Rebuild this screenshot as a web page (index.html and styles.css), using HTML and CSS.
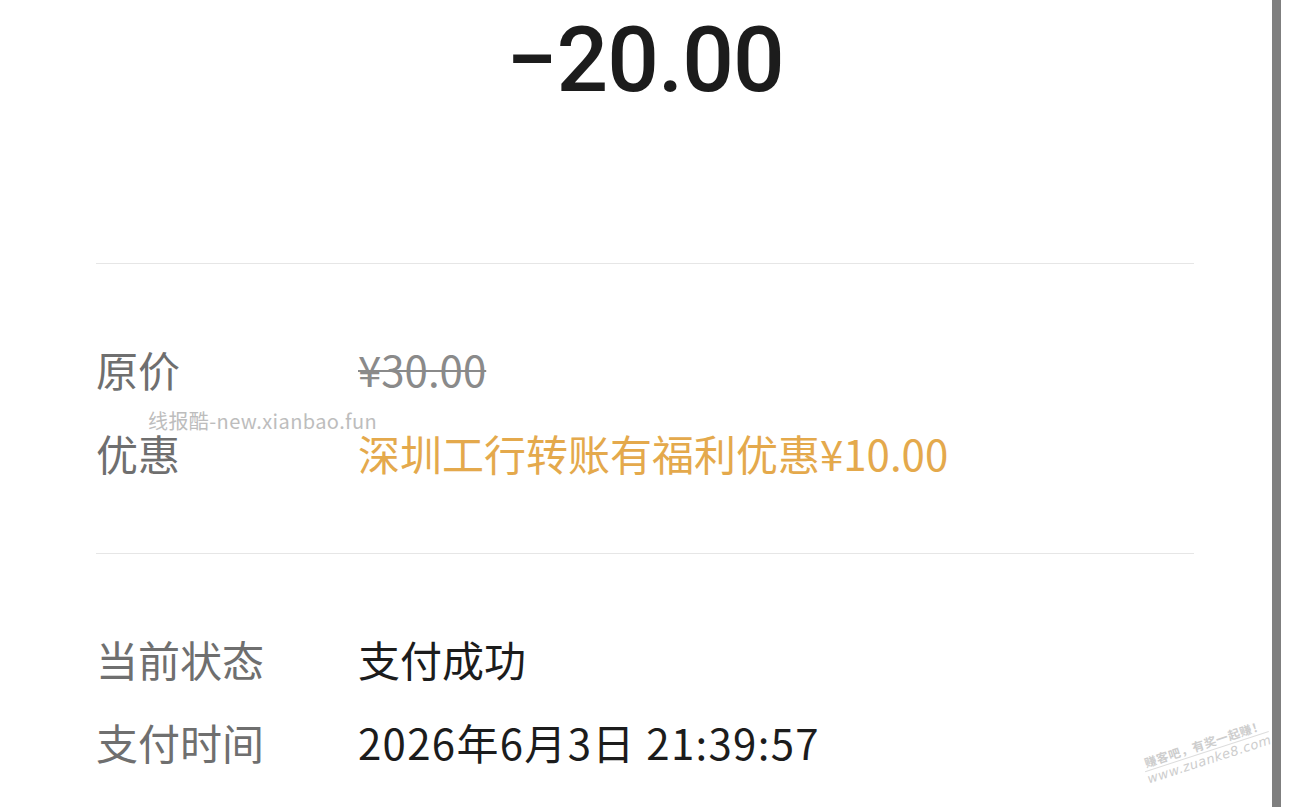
FILE: index.html
```html
<!DOCTYPE html>
<html lang="zh-CN">
<head>
<meta charset="utf-8">
<title>账单详情</title>
<link rel="stylesheet" href="styles.css">
</head>
<body>
<div class="screen">
  <main class="content">
    <div class="amount">−20.00</div>
    <section class="group group-first">
      <div class="row">
        <span class="label">原价</span>
        <span class="value value-struck">¥30.00</span>
      </div>
      <div class="row">
        <span class="label">优惠</span>
        <span class="value value-discount">深圳工行转账有福利优惠¥10.00</span>
      </div>
      <span class="mark">线报酷-new.xianbao.fun</span>
    </section>
    <section class="group group-second">
      <div class="row">
        <span class="label">当前状态</span>
        <span class="value">支付成功</span>
      </div>
      <div class="row">
        <span class="label">支付时间</span>
        <span class="value value-time">2026年6月3日 21:39:57</span>
      </div>
    </section>
    <div class="stamp">
      <div class="stamp-top">赚客吧，有奖一起赚！</div>
      <div class="stamp-bottom">www.zuanke8.com</div>
    </div>
  </main>
  <div class="scrollbar"></div>
  <div class="edge"></div>
</div>
</body>
</html>
```

FILE: styles.css
```css
* { box-sizing: border-box; }

html, body {
  margin: 0;
  padding: 0;
  background: #ffffff;
}

body {
  width: 1290px;
  height: 807px;
  overflow: hidden;
  font-family: "Noto Sans CJK SC", "Noto Sans", sans-serif;
}

.screen {
  display: flex;
  width: 1290px;
  height: 807px;
}

.content {
  position: relative;
  flex: 1;
  padding: 0 78px 0 96px;
}

.amount {
  padding-top: 15px;
  text-align: center;
  font-family: Roboto, "Liberation Sans", sans-serif;
  font-weight: 500;
  font-size: 91px;
  line-height: 91px;
  color: #1c1c1c;
  letter-spacing: -1px;
}

.group {
  position: relative;
  border-top: 1px solid #e6e6e6;
}

.group-first {
  margin-top: 157px;
  padding: 63px 0 58px;
}

.group-second {
  padding: 63px 0 0;
}

.row {
  display: flex;
  height: 84px;
  line-height: 84px;
  font-size: 42px;
}

.group-second .row + .row {
  margin-top: -1px;
}

.label {
  width: 262px;
  flex-shrink: 0;
  color: #6f6f6f;
}

.value {
  color: #1c1c1c;
}

.value-time {
  letter-spacing: 1.3px;
}

.value-struck {
  color: #8a8a8a;
  text-decoration: line-through;
  text-decoration-thickness: 2px;
}

.value-discount {
  color: #e4a94c;
}

.mark {
  position: absolute;
  left: 52px;
  top: 145px;
  font-size: 20px;
  line-height: 24px;
  letter-spacing: 0.4px;
  white-space: nowrap;
  color: #bdbdbd;
}

.stamp {
  position: absolute;
  left: 1140px;
  top: 756px;
  transform: rotate(-18deg);
  transform-origin: left top;
  color: #cdcdcd;
  text-align: center;
  white-space: nowrap;
}

.stamp-top {
  font-size: 12px;
  line-height: 15px;
  font-weight: 700;
  letter-spacing: 0.5px;
  border-bottom: 1px solid #dddddd;
  padding: 0 2px 1px;
}

.stamp-bottom {
  font-family: "DejaVu Sans", sans-serif;
  font-size: 13px;
  line-height: 16px;
  font-style: italic;
  letter-spacing: 0.5px;
}

.scrollbar {
  width: 9px;
  flex-shrink: 0;
  background: #7f7f7f;
}

.edge {
  width: 9px;
  flex-shrink: 0;
  background: #ffffff;
}
```
